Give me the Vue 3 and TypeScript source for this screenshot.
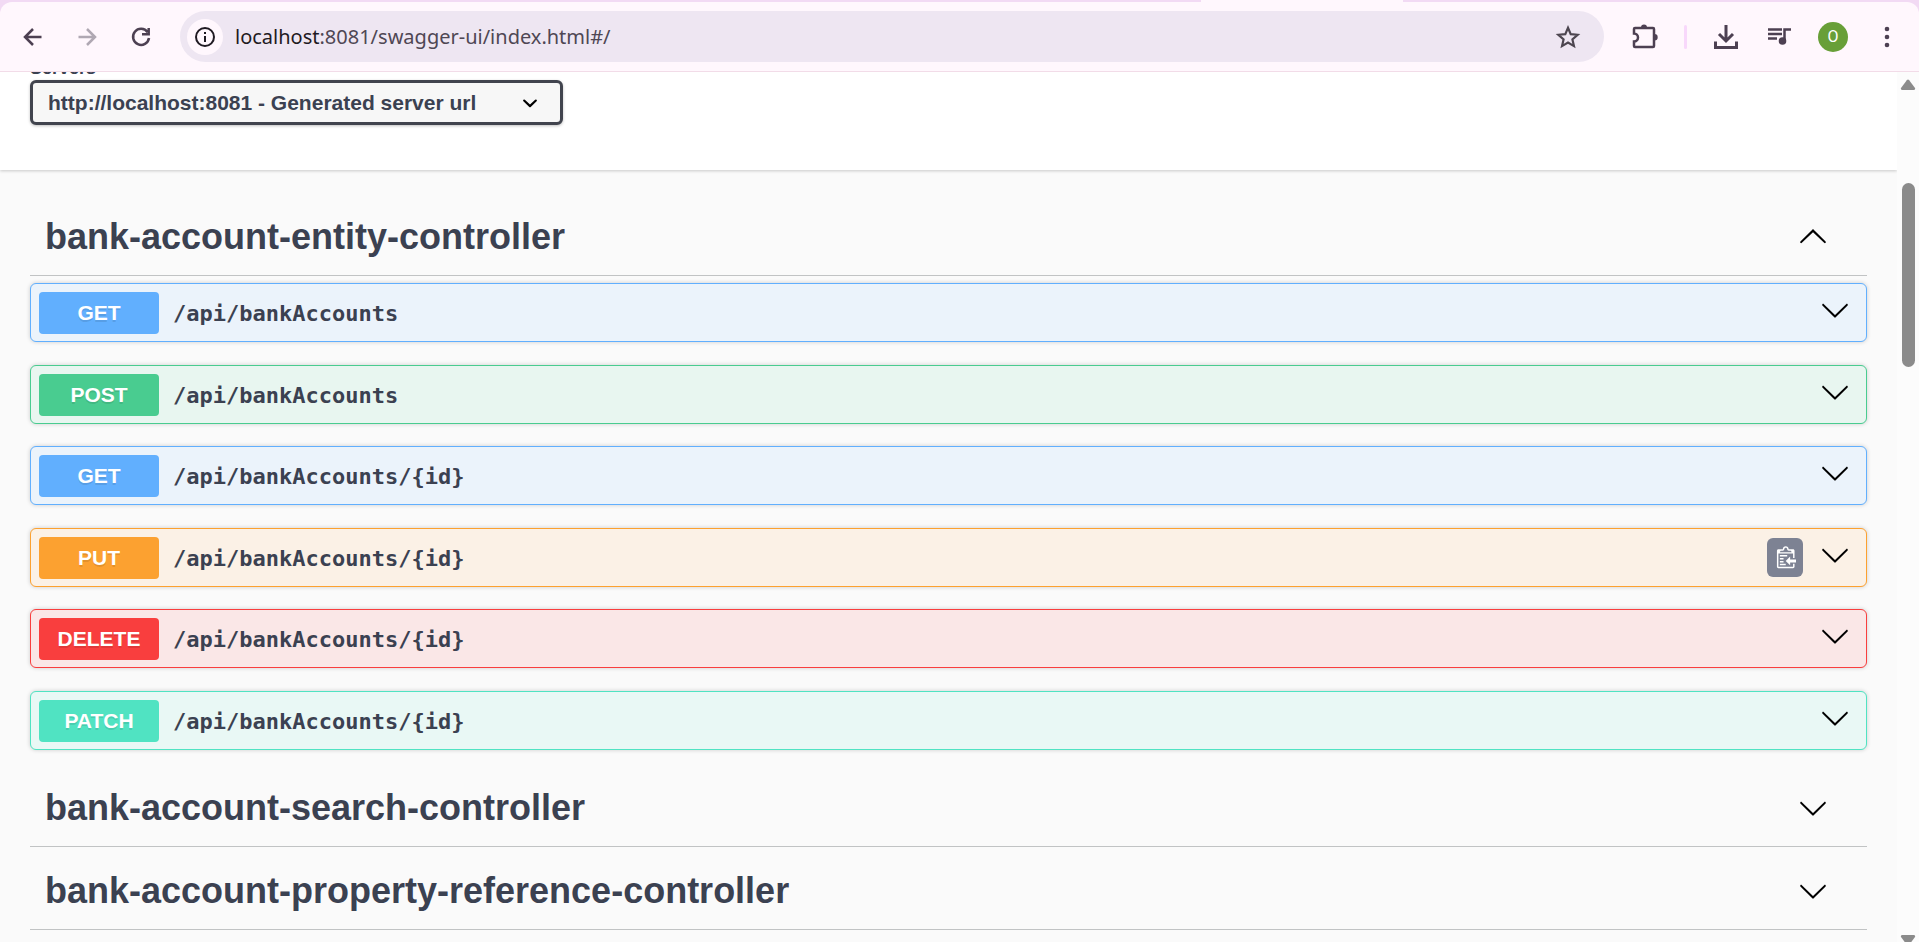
<script setup lang="ts">
import { ref } from 'vue'

type Method = 'get' | 'post' | 'put' | 'delete' | 'patch'

interface Operation {
  method: Method
  path: string
  copy?: boolean
}

interface Section {
  name: string
  open: boolean
  operations: Operation[]
}

const address = ref('localhost:8081/swagger-ui/index.html#/')
const server = ref('http://localhost:8081')

const sections = ref<Section[]>([
  {
    name: 'bank-account-entity-controller',
    open: true,
    operations: [
      { method: 'get', path: '/api/bankAccounts' },
      { method: 'post', path: '/api/bankAccounts' },
      { method: 'get', path: '/api/bankAccounts/{id}' },
      { method: 'put', path: '/api/bankAccounts/{id}', copy: true },
      { method: 'delete', path: '/api/bankAccounts/{id}' },
      { method: 'patch', path: '/api/bankAccounts/{id}' },
    ],
  },
  { name: 'bank-account-search-controller', open: false, operations: [] },
  { name: 'bank-account-property-reference-controller', open: false, operations: [] },
])
</script>

<template>
  <div class="window">
    <div class="tabstrip"><span class="active-tab"></span></div>
    <header class="toolbar">
      <nav class="history">
        <button class="tool" aria-label="Back">
          <svg width="24" height="24" viewBox="0 0 24 24"><path d="M20.500 12H4.500M12 4l-8 8 8 8" /></svg>
        </button>
        <button class="tool" aria-label="Forward" disabled>
          <svg width="24" height="24" viewBox="0 0 24 24"><path d="M3.500 12h16M12 4l8 8-8 8" /></svg>
        </button>
        <button class="tool" aria-label="Reload">
          <svg width="24" height="24" viewBox="0 0 24 24"><path d="M18.600 7.200A8 8 0 1 0 20 13M19.700 3v6.300H13" /></svg>
        </button>
      </nav>
      <form class="omnibox" @submit.prevent>
        <button class="site-info" type="button" aria-label="View site information">
          <svg width="22" height="22" viewBox="0 0 22 22">
            <circle cx="11" cy="11" r="9" />
            <path d="M11 10v6M11 6v2" />
          </svg>
        </button>
        <label class="address">
          <span class="shown"><b>localhost</b>{{ address.slice(9) }}</span>
          <input v-model="address" aria-label="Address" spellcheck="false" />
        </label>
        <button class="star" type="button" aria-label="Bookmark this tab">
          <svg width="26" height="26" viewBox="0 0 24 24">
            <path d="M12 3.500l2.500 5.900 6.400.55-4.850 4.200 1.450 6.250L12 17.100l-5.500 3.300 1.450-6.250L3.100 9.950l6.400-.55z" />
          </svg>
        </button>
      </form>
      <div class="actions">
        <button class="tool" aria-label="Extensions">
          <svg width="28" height="28" viewBox="0 0 28 28">
            <path d="M4 5h18a1 1 0 0 1 1 1v17a1 1 0 0 1-1 1H4a1 1 0 0 1-1-1v-4.500a4 4 0 0 0 0-8V6a1 1 0 0 1 1-1z" />
            <path class="solid" d="M10 4.500a3 3 0 0 1 6 0zM23.500 11a3.200 3.200 0 0 1 0 6.400z" />
          </svg>
        </button>
        <span class="divider"></span>
        <button class="tool" aria-label="Downloads">
          <svg width="28" height="28" viewBox="0 0 28 28">
            <path class="thick" d="M14 2v15M7 11l7 7 7-7M3.500 18.500v6h21v-6" />
          </svg>
        </button>
        <button class="tool" aria-label="Media controls">
          <svg width="28" height="28" viewBox="0 0 28 28">
            <path d="M3 6.500h14M3 11h14M3 15.500h9M19.500 18V6.500H26" />
            <circle class="solid" cx="17.500" cy="18" r="3.800" />
          </svg>
        </button>
        <button class="avatar" aria-label="Profile">O</button>
        <button class="tool menu" aria-label="Menu">
          <svg width="8" height="24" viewBox="0 0 8 24">
            <circle class="solid" cx="4" cy="4" r="2.300" />
            <circle class="solid" cx="4" cy="12" r="2.300" />
            <circle class="solid" cx="4" cy="20" r="2.300" />
          </svg>
        </button>
      </div>
    </header>

    <div class="viewport">
      <main class="page">
        <section class="servers">
          <label for="servers">Servers</label>
          <div class="select">
            <select id="servers" v-model="server">
              <option value="http://localhost:8081">http://localhost:8081 - Generated server url</option>
            </select>
            <svg width="30" height="30" viewBox="0 0 20 20">
              <path d="M13.418 7.859a.695.695 0 0 1 .978 0 .68.68 0 0 1 0 .969l-3.908 3.830a.697.697 0 0 1-.979 0l-3.908-3.830a.68.68 0 0 1 0-.969.695.695 0 0 1 .978 0L10 11z" />
            </svg>
          </div>
        </section>

        <div class="sections">
          <section v-for="s in sections" :key="s.name">
            <h3>
              <button class="tag" :aria-expanded="s.open" @click="s.open = !s.open">
                <span>{{ s.name }}</span>
                <svg class="arrow" :class="{ up: s.open }" width="30" height="30" viewBox="0 0 20 20">
                  <path d="M17.418 6.109c.272-.268.709-.268.979 0s.271.701 0 .969l-7.908 7.830c-.27.268-.707.268-.979 0l-7.908-7.830c-.27-.268-.27-.701 0-.969.271-.268.709-.268.979 0L10 13.250z" />
                </svg>
              </button>
            </h3>
            <ul v-if="s.open && s.operations.length" class="operations">
              <li v-for="op in s.operations" :key="op.method + op.path" :class="['operation', op.method]">
                <button class="summary">
                  <span class="method">{{ op.method.toUpperCase() }}</span>
                  <span class="path">{{ op.path }}</span>
                </button>
                <button v-if="op.copy" class="copy" aria-label="Copy to clipboard">
                  <svg width="22" height="24" viewBox="0 0 15 16">
                    <g transform="translate(2 -1)">
                      <path fill-rule="evenodd" d="M2 13h4v1H2v-1zm5-6H2v1h5V7zm2 3V8l-3 3 3 3v-2h5v-2H9zM4.500 9H2v1h2.500V9zM2 12h2.500v-1H2v1zm9 1h1v2c-.02.28-.11.52-.3.7-.19.18-.42.28-.7.3H1c-.55 0-1-.45-1-1V4c0-.55.45-1 1-1h3c0-1.110.890-2 2-2 1.110 0 2 .890 2 2h3c.55 0 1 .45 1 1v5h-1V6H1v9h10v-2zM2 5h8c0-.55-.45-1-1-1H8c-.55 0-1-.45-1-1s-.45-1-1-1-1 .45-1 1-.45 1-1 1H3c-.55 0-1 .45-1 1z" />
                    </g>
                  </svg>
                </button>
                <button class="expand" aria-label="Expand operation">
                  <svg class="arrow" width="30" height="30" viewBox="0 0 20 20">
                    <path d="M17.418 6.109c.272-.268.709-.268.979 0s.271.701 0 .969l-7.908 7.830c-.27.268-.707.268-.979 0l-7.908-7.830c-.27-.268-.27-.701 0-.969.271-.268.709-.268.979 0L10 13.250z" />
                  </svg>
                </button>
              </li>
            </ul>
          </section>
        </div>
      </main>
      <div class="scrollbar">
        <svg width="16" height="12" viewBox="0 0 16 12"><path d="M6.800 1.200a1.500 1.500 0 0 1 2.400 0L15 9a1.500 1.500 0 0 1-1 2H2a1.500 1.500 0 0 1-1-2z" /></svg>
        <div class="track"><div class="thumb"></div></div>
        <svg width="16" height="12" viewBox="0 0 16 12"><path d="M6.800 10.800a1.500 1.500 0 0 0 2.400 0L15 3a1.500 1.500 0 0 0-1-2H2a1.500 1.500 0 0 0-1 2z" /></svg>
      </div>
    </div>
  </div>
</template>

<style>
body {
  margin: 0;
  overflow: hidden;
}
</style>

<style scoped>
.window {
  height: 100vh;
  display: flex;
  flex-direction: column;
  overflow: hidden;
  background: #f2daf4;
  color: #3b4151;
  font-family: "Liberation Sans", Arial, sans-serif;
}
button {
  padding: 0;
  border: 0;
  background: none;
  color: inherit;
  font: inherit;
  cursor: pointer;
}
svg {
  display: block;
  flex: none;
}
.tabstrip {
  flex: none;
  height: 2px;
  display: flex;
}
.active-tab {
  width: 202px;
  margin-left: 1201px;
  background: #fff7fd;
}
.toolbar {
  flex: none;
  height: 69px;
  display: flex;
  align-items: center;
  padding: 0 28px 0 21px;
  gap: 27px;
  background: #fff7fd;
  border-bottom: 1px solid #f2dce8;
  border-radius: 12px 12px 0 0;
}
.history {
  display: flex;
  gap: 30px;
}
.tool svg {
  fill: none;
  stroke: #4d4052;
  stroke-width: 2.500;
}
.tool .thick {
  stroke-width: 3;
}
.tool .solid {
  fill: #4d4052;
  stroke: none;
}
.tool:disabled svg {
  stroke: #b0a8b3;
}
.omnibox {
  flex: 1;
  height: 51px;
  display: flex;
  align-items: center;
  padding: 0 23px 0 7px;
  border-radius: 26px;
  background: #eee6f2;
}
.site-info {
  width: 36px;
  height: 36px;
  display: grid;
  place-items: center;
  border-radius: 50%;
  background: #fff7fd;
}
.site-info svg {
  fill: none;
  stroke: #1f1a22;
  stroke-width: 2;
}
.address {
  flex: 1;
  display: grid;
  margin-left: 12px;
  font: 20px/30px "Noto Sans", sans-serif;
  color: #4f4754;
}
.address > * {
  grid-area: 1 / 1;
}
.address b {
  font-weight: 400;
  color: #1f1a22;
}
.address input {
  min-width: 0;
  padding: 0;
  border: 0;
  outline: 0;
  background: transparent;
  color: transparent;
  caret-color: #1f1a22;
  font: inherit;
}
.star svg {
  fill: none;
  stroke: #4d4650;
  stroke-width: 2;
}
.actions {
  display: flex;
  align-items: center;
  gap: 25px;
}
.divider {
  width: 3px;
  height: 24px;
  border-radius: 2px;
  background: #f8d8fb;
}
.avatar {
  width: 30px;
  height: 30px;
  border-radius: 50%;
  background: #689f38;
  color: #fff;
  font: 16px/30px Roboto, sans-serif;
}
.menu {
  margin-left: 10px;
}
.viewport {
  flex: 1;
  min-height: 0;
  display: flex;
  margin-bottom: -4px;
  background: #fafafa;
}
.page {
  flex: 1;
  min-width: 0;
  overflow: hidden;
  display: flex;
  flex-direction: column;
}
.servers {
  flex: none;
  display: flex;
  flex-direction: column;
  align-items: flex-start;
  margin-top: -16px;
  padding: 0 30px 45px;
  background: #fff;
  box-shadow: 0 1px 3px rgba(0, 0, 0, 0.2);
}
.servers label {
  font: bold 18px/24px "Liberation Sans", Arial, sans-serif;
}
.select {
  display: grid;
  align-items: center;
}
.select > * {
  grid-area: 1 / 1;
}
.select svg {
  justify-self: end;
  margin-right: 18px;
  pointer-events: none;
}
select {
  appearance: none;
  height: 45px;
  padding: 0 83px 0 15px;
  border: 3px solid #41444e;
  border-radius: 6px;
  background: #f7f7f7;
  box-shadow: 0 1px 3px rgba(0, 0, 0, 0.25);
  color: #3b4151;
  font: bold 21px/30px "Liberation Sans", Arial, sans-serif;
}
.sections {
  padding: 23px 30px 0;
}
h3 {
  margin: 0;
  border-bottom: 1px solid #c1c3c4;
}
.tag {
  width: 100%;
  height: 82px;
  display: flex;
  align-items: center;
  justify-content: space-between;
  padding: 6px 39px 0 15px;
  font: bold 36px/42px "Liberation Sans", Arial, sans-serif;
}
.arrow {
  fill: #000;
}
.up {
  transform: rotate(180deg);
}
.operations {
  list-style: none;
  margin: 0;
  padding: 7px 0 14px;
}
.operation {
  height: 57px;
  display: flex;
  align-items: center;
  margin-bottom: 23px;
  padding: 0 16px 0 8px;
  border: 1px solid var(--accent);
  border-radius: 6px;
  background: var(--tint);
  box-shadow: 0 0 4px rgba(0, 0, 0, 0.19);
}
.operation:nth-child(even) {
  margin-bottom: 22px;
}
.operation:last-child {
  margin-bottom: 0;
}
.get {
  --accent: #61affe;
  --tint: #ebf3fb;
}
.post {
  --accent: #49cc90;
  --tint: #e8f6f0;
}
.put {
  --accent: #fca130;
  --tint: #fbf1e6;
}
.delete {
  --accent: #f93e3e;
  --tint: #fae7e7;
}
.patch {
  --accent: #50e3c2;
  --tint: #e9f8f5;
}
.summary {
  flex: 1;
  display: flex;
  align-items: center;
  gap: 14px;
}
.method {
  width: 120px;
  border-radius: 4px;
  background: var(--accent);
  color: #fff;
  text-align: center;
  text-shadow: 0 2px 0 rgba(0, 0, 0, 0.1);
  font: bold 21px/42px "Liberation Sans", Arial, sans-serif;
}
.path {
  padding-top: 2px;
  font: bold 22px/30px "DejaVu Sans Mono", monospace;
}
.copy {
  width: 36px;
  height: 39px;
  display: grid;
  place-items: center;
  margin-right: 17px;
  border-radius: 6px;
  background: #7d8293;
}
.copy svg {
  fill: #fff;
}
.expand {
  padding-bottom: 6px;
}
.scrollbar {
  width: 22px;
  display: flex;
  flex-direction: column;
  align-items: center;
  padding-top: 7px;
  background: #fcfcfc;
}
.scrollbar svg {
  fill: #8b8b8b;
}
.track {
  flex: 1;
  padding-top: 92px;
}
.thumb {
  width: 13px;
  height: 184px;
  border-radius: 7px;
  background: #8b8b8b;
}
</style>
